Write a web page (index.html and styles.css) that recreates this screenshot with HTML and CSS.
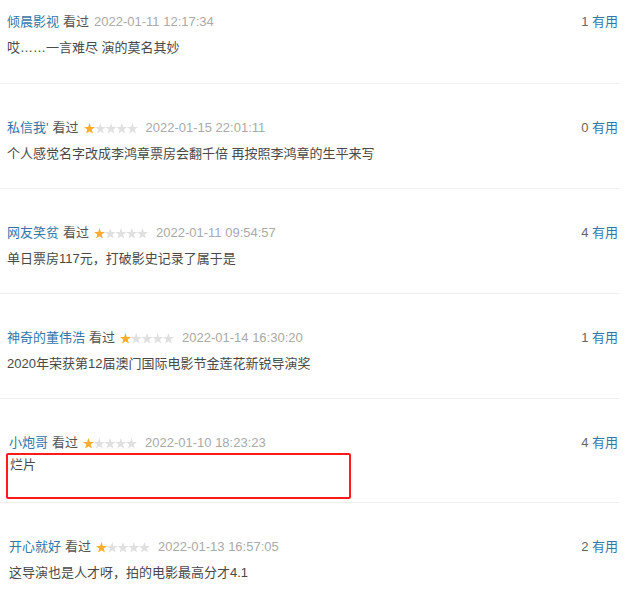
FILE: index.html
```html
<!DOCTYPE html>
<html lang="zh-CN">
<head>
<meta charset="utf-8">
<title>短评</title>
<link rel="stylesheet" href="styles.css">
</head>
<body>
<svg class="defs" width="0" height="0" aria-hidden="true">
  <defs>
    <symbol id="star" viewBox="0 0 11 11">
      <path d="M5.5 0 L6.85 3.9 L11 3.95 L7.7 6.45 L8.9 10.6 L5.5 8.2 L2.1 10.6 L3.3 6.45 L0 3.95 L4.15 3.9Z"/>
    </symbol>
  </defs>
</svg>
<div class="list">
  <div class="item first">
    <div class="head">
      <div class="info"><a class="name">倾晨影视</a><span class="seen">看过</span><span class="time">2022-01-11 12:17:34</span></div>
      <div class="vote"><span class="num">1</span> <span class="useful">有用</span></div>
    </div>
    <p class="text">哎……一言难尽 演的莫名其妙</p>
  </div>
  <div class="item">
    <div class="head">
      <div class="info"><a class="name">私信我'</a><span class="seen">看过</span>
        <svg class="stars" width="54" height="11" viewBox="0 0 54 11"><use href="#star" class="on" x="0" width="11" height="11"/><use href="#star" class="off" x="10.75" width="11" height="11"/><use href="#star" class="off" x="21.5" width="11" height="11"/><use href="#star" class="off" x="32.25" width="11" height="11"/><use href="#star" class="off" x="43" width="11" height="11"/></svg>
        <span class="time">2022-01-15 22:01:11</span></div>
      <div class="vote"><span class="num">0</span> <span class="useful">有用</span></div>
    </div>
    <p class="text">个人感觉名字改成李鸿章票房会翻千倍 再按照李鸿章的生平来写</p>
  </div>
  <div class="item">
    <div class="head">
      <div class="info"><a class="name">网友笑贫</a><span class="seen">看过</span>
        <svg class="stars" width="54" height="11" viewBox="0 0 54 11"><use href="#star" class="on" x="0" width="11" height="11"/><use href="#star" class="off" x="10.75" width="11" height="11"/><use href="#star" class="off" x="21.5" width="11" height="11"/><use href="#star" class="off" x="32.25" width="11" height="11"/><use href="#star" class="off" x="43" width="11" height="11"/></svg>
        <span class="time">2022-01-11 09:54:57</span></div>
      <div class="vote"><span class="num">4</span> <span class="useful">有用</span></div>
    </div>
    <p class="text">单日票房117元，打破影史记录了属于是</p>
  </div>
  <div class="item">
    <div class="head">
      <div class="info"><a class="name">神奇的董伟浩</a><span class="seen">看过</span>
        <svg class="stars" width="54" height="11" viewBox="0 0 54 11"><use href="#star" class="on" x="0" width="11" height="11"/><use href="#star" class="off" x="10.75" width="11" height="11"/><use href="#star" class="off" x="21.5" width="11" height="11"/><use href="#star" class="off" x="32.25" width="11" height="11"/><use href="#star" class="off" x="43" width="11" height="11"/></svg>
        <span class="time">2022-01-14 16:30:20</span></div>
      <div class="vote"><span class="num">1</span> <span class="useful">有用</span></div>
    </div>
    <p class="text">2020年荣获第12届澳门国际电影节金莲花新锐导演奖</p>
  </div>
  <div class="item shift marked">
    <div class="head">
      <div class="info"><a class="name">小炮哥</a><span class="seen">看过</span>
        <svg class="stars" width="54" height="11" viewBox="0 0 54 11"><use href="#star" class="on" x="0" width="11" height="11"/><use href="#star" class="off" x="10.75" width="11" height="11"/><use href="#star" class="off" x="21.5" width="11" height="11"/><use href="#star" class="off" x="32.25" width="11" height="11"/><use href="#star" class="off" x="43" width="11" height="11"/></svg>
        <span class="time">2022-01-10 18:23:23</span></div>
      <div class="vote"><span class="num">4</span> <span class="useful">有用</span></div>
    </div>
    <div class="highlight"><p class="text">烂片</p></div>
  </div>
  <div class="item shift">
    <div class="head">
      <div class="info"><a class="name">开心就好</a><span class="seen">看过</span>
        <svg class="stars" width="54" height="11" viewBox="0 0 54 11"><use href="#star" class="on" x="0" width="11" height="11"/><use href="#star" class="off" x="10.75" width="11" height="11"/><use href="#star" class="off" x="21.5" width="11" height="11"/><use href="#star" class="off" x="32.25" width="11" height="11"/><use href="#star" class="off" x="43" width="11" height="11"/></svg>
        <span class="time">2022-01-13 16:57:05</span></div>
      <div class="vote"><span class="num">2</span> <span class="useful">有用</span></div>
    </div>
    <p class="text">这导演也是人才呀，拍的电影最高分才4.1</p>
  </div>
</div>
</body>
</html>
```
FILE: styles.css
```css
html, body {
  margin: 0;
  padding: 0;
  background: #fff;
}
body {
  font-family: "Liberation Sans", "Noto Sans CJK SC", sans-serif;
  font-size: 13px;
  color: #494949;
  overflow: hidden;
}
.defs {
  position: absolute;
  width: 0;
  height: 0;
}
.list {
  width: 619px;
}
.item {
  padding: 34px 1px 24px 7px;
  border-bottom: 1px solid #eeeeee;
}
.item.first {
  padding-top: 12px;
  padding-bottom: 25px;
}
.item.shift {
  padding-left: 9px;
}
.item.marked {
  padding-left: 6px;
  padding-bottom: 3px;
}
.item.marked .head {
  padding-left: 3px;
}
.head {
  display: flex;
  justify-content: space-between;
  align-items: center;
  height: 20px;
  line-height: 20px;
}
.info {
  display: flex;
  align-items: center;
}
.name {
  color: #3377aa;
}
.seen {
  color: #555;
  margin-left: 4px;
}
.stars {
  display: block;
  margin-left: 5px;
  margin-top: 1px;
}
.stars .on {
  fill: #ffac2d;
}
.stars .off {
  fill: #e0e0e0;
}
.time {
  color: #aaa;
  margin-left: 5px;
}
.stars + .time {
  margin-left: 8px;
}
.vote {
  color: #666;
}
.useful {
  color: #3377aa;
}
.text {
  margin: 6px 0 0;
  line-height: 20px;
}
.highlight {
  box-sizing: border-box;
  width: 345px;
  height: 46px;
  border: 2px solid #ff1a1a;
  border-radius: 2px;
  padding: 0 0 0 2px;
}
.highlight .text {
  margin: 0;
}
```
